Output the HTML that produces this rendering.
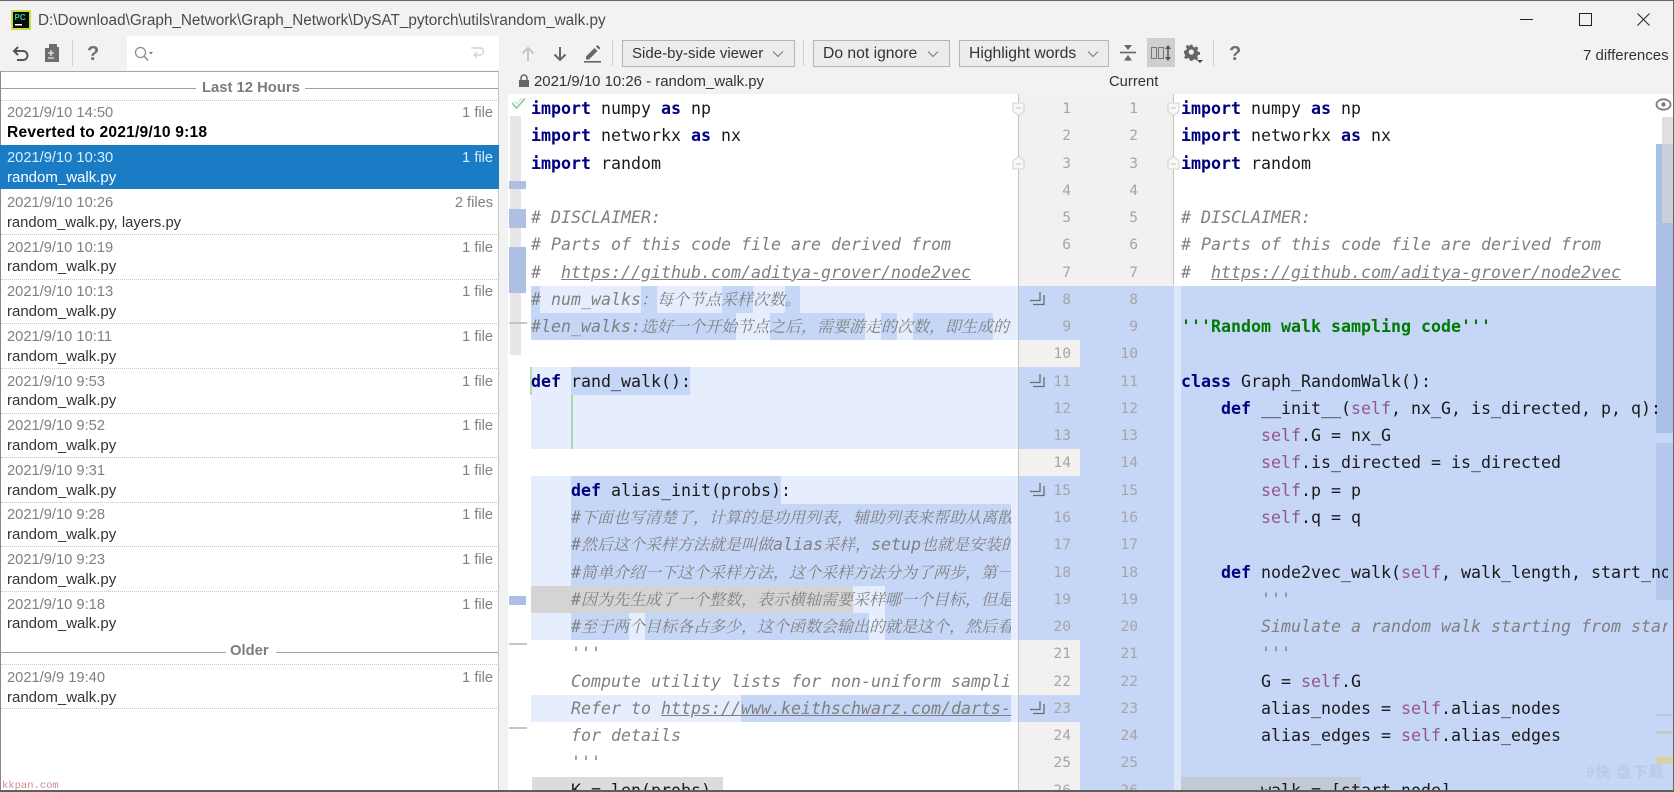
<!DOCTYPE html>
<html><head><meta charset="utf-8"><style>
html,body{margin:0;padding:0;width:1674px;height:792px;overflow:hidden;background:#f2f2f2}
body{position:relative;font-family:"Liberation Sans","Noto Sans CJK SC",sans-serif;color:#333}
div,span.a,svg{position:absolute}
.r{position:absolute}
.t{white-space:nowrap}
.code{position:absolute;overflow:hidden;font-family:"DejaVu Sans Mono","Noto Serif CJK SC",monospace;font-size:16.61px;color:#1a1a1a;top:95px}
.code p{margin:0;height:27.28px;line-height:27.28px;white-space:pre}
.code b{color:#000080;font-weight:bold}
.code i,.c{color:#808080;font-style:italic}
.code u{text-decoration:underline}
.code em{font-style:normal;color:#94558d}
.code strong{color:#007a00;font-weight:bold}
.code s{text-decoration:none;font-size:16px;letter-spacing:0}
.num{position:absolute;top:95px;width:40px;text-align:right;font-family:"DejaVu Sans Mono",monospace;font-size:14.6px;color:#a6a6a6}
.num p{margin:0;height:27.28px;line-height:27.28px}
.date{position:absolute;left:7px;margin-top:1px;font-size:14.7px;color:#808080;white-space:nowrap;line-height:20px}
.fl{position:absolute;right:1181px;margin-top:1px;font-size:14.6px;color:#808080;white-space:nowrap;line-height:20px}
.nm{position:absolute;left:7px;margin-top:1px;font-size:15px;color:#333;white-space:nowrap;line-height:20px}
.dot{position:absolute;left:1px;width:498px;height:0;border-top:1px dotted #c6c6c6}
.dd{position:absolute;top:40px;height:25px;background:#ececec;border:1px solid #b4b4b4;font-size:15px;line-height:26px;color:#333;white-space:nowrap}
.sep{position:absolute;width:1px;background:#cfcfcf;top:40px;height:26px}
.arw{position:absolute;left:1030px;width:16px;height:16px}
</style></head><body>

<!-- frame + title -->
<div style="left:0;top:0;width:1674px;height:1px;background:#666"></div>
<svg style="left:11px;top:10px" width="20" height="20" viewBox="0 0 20 20"><rect width="20" height="20" fill="#c8dc46"/><rect x="2" y="2" width="16" height="16" fill="#0a0a0a"/><rect x="4" y="14" width="7" height="1.5" fill="#fff"/><text x="3.5" y="10" font-family="Liberation Sans" font-size="8" font-weight="bold" fill="#21d789">PC</text></svg>
<div class="t" style="left:38px;top:11px;font-size:15.3px;line-height:20px;color:#4a4a4a">D:\Download\Graph_Network\Graph_Network\DySAT_pytorch\utils\random_walk.py</div>
<div style="left:1520px;top:19px;width:13px;height:1px;background:#222"></div>
<div style="left:1579px;top:13px;width:11px;height:11px;border:1px solid #222"></div>
<svg style="left:1637px;top:13px" width="13" height="13" viewBox="0 0 13 13"><path d="M.5.5l12 12M12.5.5l-12 12" stroke="#222" fill="none"/></svg>

<!-- left toolbar -->
<svg style="left:12px;top:45px" width="18" height="17" viewBox="0 0 18 17"><path d="M6 2L2 6l4 4M2.500 6H11a4.500 4.500 0 0 1 0 9H5" stroke="#555" stroke-width="2" fill="none"/></svg>
<svg style="left:44px;top:43px" width="16" height="20" viewBox="0 0 16 20"><path d="M5 1h8v3h2v15H1V5h4z" fill="#6e6e6e"/><path d="M4 10h6M7 7v6M4 15h6" stroke="#e8e8e8" stroke-width="1.300"/></svg>
<div class="sep" style="left:72px"></div>
<div class="t" style="left:87px;top:43px;font-size:20px;font-weight:bold;line-height:22px;color:#6e6e6e">?</div>
<div style="left:127px;top:36px;width:372px;height:34px;background:#fff"></div>
<svg style="left:134px;top:46px" width="20" height="16" viewBox="0 0 20 16"><circle cx="6.500" cy="6.500" r="5" stroke="#8f8f8f" stroke-width="1.300" fill="none"/><path d="M10 10l4 4.500" stroke="#8f8f8f" stroke-width="1.500"/><path d="M15 6h4l-2 2.500z" fill="#777"/></svg>
<svg style="left:470px;top:46px" width="16" height="15" viewBox="0 0 16 15"><path d="M1 2h9a3.500 3.500 0 0 1 0 7H5M7 6L4 9l3 3" stroke="#d3d3d3" stroke-width="1.400" fill="none"/></svg>

<!-- history list -->
<div style="left:0;top:71px;width:499px;height:720px;background:#fff;border-top:1px solid #a8a8a8;border-right:1px solid #c6c6c6;box-sizing:border-box"></div>
<div style="left:0;top:71px;width:1px;height:720px;background:#888"></div>
<div style="left:1px;top:88px;width:195px;height:1px;background:#a0a0a0"></div>
<div style="left:305px;top:88px;width:193px;height:1px;background:#a0a0a0"></div>
<div class="t" style="left:202px;top:78px;font-size:14.8px;font-weight:bold;line-height:20px;color:#7c7c7c">Last 12 Hours</div>
<div class="dot" style="top:100px"></div>

<div class="date" style="top:102px">2021/9/10 14:50</div><div class="fl" style="top:102px">1 file</div><div class="nm" style="top:122px;font-weight:bold;color:#000;font-size:15.6px;letter-spacing:.2px">Reverted to 2021/9/10 9:18</div>

<div style="left:0;top:145px;width:499px;height:44px;background:#1a7cc4"></div>
<div class="date" style="top:147px;color:#d9eefa">2021/9/10 10:30</div><div class="fl" style="top:147px;color:#d9eefa">1 file</div><div class="nm" style="top:167px;color:#fff">random_walk.py</div>

<div class="date" style="top:192px">2021/9/10 10:26</div><div class="fl" style="top:192px">2 files</div><div class="nm" style="top:212px;font-size:14.8px">random_walk.py, layers.py</div><div class="dot" style="top:234px"></div>
<div class="date" style="top:237px">2021/9/10 10:19</div><div class="fl" style="top:237px">1 file</div><div class="nm" style="top:256px">random_walk.py</div><div class="dot" style="top:279px"></div>
<div class="date" style="top:281px">2021/9/10 10:13</div><div class="fl" style="top:281px">1 file</div><div class="nm" style="top:301px">random_walk.py</div><div class="dot" style="top:323px"></div>
<div class="date" style="top:326px">2021/9/10 10:11</div><div class="fl" style="top:326px">1 file</div><div class="nm" style="top:346px">random_walk.py</div><div class="dot" style="top:368px"></div>
<div class="date" style="top:371px">2021/9/10 9:53</div><div class="fl" style="top:371px">1 file</div><div class="nm" style="top:390px">random_walk.py</div><div class="dot" style="top:413px"></div>
<div class="date" style="top:415px">2021/9/10 9:52</div><div class="fl" style="top:415px">1 file</div><div class="nm" style="top:435px">random_walk.py</div><div class="dot" style="top:457px"></div>
<div class="date" style="top:460px">2021/9/10 9:31</div><div class="fl" style="top:460px">1 file</div><div class="nm" style="top:480px">random_walk.py</div><div class="dot" style="top:502px"></div>
<div class="date" style="top:504px">2021/9/10 9:28</div><div class="fl" style="top:504px">1 file</div><div class="nm" style="top:524px">random_walk.py</div><div class="dot" style="top:546px"></div>
<div class="date" style="top:549px">2021/9/10 9:23</div><div class="fl" style="top:549px">1 file</div><div class="nm" style="top:569px">random_walk.py</div><div class="dot" style="top:591px"></div>
<div class="date" style="top:594px">2021/9/10 9:18</div><div class="fl" style="top:594px">1 file</div><div class="nm" style="top:613px">random_walk.py</div>

<div style="left:1px;top:652px;width:225px;height:1px;background:#a0a0a0"></div>
<div style="left:276px;top:652px;width:222px;height:1px;background:#a0a0a0"></div>
<div class="t" style="left:230px;top:641px;font-size:14.8px;font-weight:bold;line-height:20px;color:#7c7c7c">Older</div>
<div class="dot" style="top:664px"></div>
<div class="date" style="top:667px">2021/9/9 19:40</div><div class="fl" style="top:667px">1 file</div><div class="nm" style="top:687px">random_walk.py</div><div class="dot" style="top:708px"></div>
<div class="t" style="left:2px;top:779px;font-family:'Liberation Mono',monospace;font-size:10.500px;line-height:14px;color:#d08c8c">kkpan.com</div>

<!-- main toolbar -->
<svg style="left:520px;top:45px" width="16" height="18" viewBox="0 0 16 18"><path d="M8 16V3M2.500 8.500L8 3l5.500 5.500" stroke="#c4c4c4" stroke-width="2" fill="none"/></svg>
<svg style="left:552px;top:45px" width="16" height="18" viewBox="0 0 16 18"><path d="M8 2v13M2.500 9.500L8 15l5.500-5.500" stroke="#666" stroke-width="2" fill="none"/></svg>
<svg style="left:583px;top:44px" width="19" height="19" viewBox="0 0 19 19"><path d="M3 12.500L11.500 4l3 3L6 15.500H3zM13 2.500l1.500-1.500 3 3L16 5.500z" fill="#666"/><rect x="1" y="17" width="17" height="1.600" fill="#666"/></svg>
<div class="sep" style="left:612px"></div>
<div class="dd" style="left:622px;width:171px"><span style="position:absolute;left:9px;font-size:15.05px">Side-by-side viewer</span></div>
<svg style="left:772px;top:50px" width="12" height="8" viewBox="0 0 12 8"><path d="M1 1.500L6 6.500l5-5" stroke="#777" fill="none"/></svg>
<div class="sep" style="left:803px"></div>
<div class="dd" style="left:813px;width:135px"><span style="position:absolute;left:9px;font-size:15.7px">Do not ignore</span></div>
<svg style="left:927px;top:50px" width="12" height="8" viewBox="0 0 12 8"><path d="M1 1.500L6 6.500l5-5" stroke="#777" fill="none"/></svg>
<div class="dd" style="left:959px;width:148px"><span style="position:absolute;left:9px;font-size:15.7px">Highlight words</span></div>
<svg style="left:1087px;top:50px" width="12" height="8" viewBox="0 0 12 8"><path d="M1 1.500L6 6.500l5-5" stroke="#777" fill="none"/></svg>
<svg style="left:1120px;top:44px" width="16" height="18" viewBox="0 0 16 18"><path d="M0 8.500h16" stroke="#666" stroke-width="1.600"/><path d="M4 1h8L8 6zM4 16.500h8L8 11z" fill="#666"/></svg>
<div style="left:1147px;top:38px;width:28px;height:29px;background:#cfcfcf"></div>
<svg style="left:1151px;top:44px" width="22" height="18" viewBox="0 0 22 18"><rect x=".5" y="3.500" width="5" height="11" fill="none" stroke="#777"/><rect x="7.500" y="3.500" width="5" height="11" fill="none" stroke="#777"/><path d="M17 2v14" stroke="#555" stroke-width="1.500"/><path d="M14 5l3-4 3 4zM14 13l3 4 3-4z" fill="#555"/></svg>
<svg style="left:1184px;top:43px" width="20" height="21" viewBox="0 0 20 21"><path d="M7 1h3l.5 2.500 2 .8L14.800 3l2 2-1.300 2.200.8 2 2.500.5v3l-2.500.5-.8 2 1.300 2.200-2 2-2.300-1.300-2 .8L10 20H7l-.5-2.500-2-.8L2.200 18l-2-2 1.300-2.200-.8-2L0 11V8l2.500-.5.8-2L2 3.200l2-2 2.300 1.300L6.500 3z" transform="scale(.85) translate(0 1)" fill="#666"/><circle cx="7.300" cy="9" r="2.600" fill="#f2f2f2"/><path d="M13 17h6l-3 3z" fill="#444"/></svg>
<div class="sep" style="left:1213px"></div>
<div class="t" style="left:1229px;top:43px;font-size:20px;font-weight:bold;line-height:22px;color:#6e6e6e">?</div>
<div class="t" style="left:1583px;top:45px;margin-top:1px;font-size:15px;line-height:20px;color:#333">7 differences</div>

<!-- header row -->
<svg style="left:518px;top:74px" width="12" height="14" viewBox="0 0 12 14"><path d="M3 6V4a3 3 0 0 1 6 0v2" stroke="#666" stroke-width="1.500" fill="none"/><rect x="1" y="6" width="10" height="7" fill="#666"/></svg>
<div class="t" style="left:534px;top:72px;font-size:14.95px;line-height:20px;color:#333">2021/9/10 10:26 - random_walk.py</div>
<div class="t" style="left:1109px;top:72px;font-size:14.8px;line-height:20px;color:#333">Current</div>

<!-- editors background -->
<div style="left:508px;top:94px;width:510px;height:696px;background:#fff"></div>
<div style="left:1018px;top:94px;width:155px;height:696px;background:#f2f1f0"></div>
<div style="left:1018px;top:94px;width:1px;height:696px;background:#c4c4c4"></div>
<div style="left:1173px;top:94px;width:1px;height:191px;background:#c4c4c4"></div>
<div style="left:1174px;top:94px;width:500px;height:191.500px;background:#fff"></div>

<!-- right blue -->
<div style="left:1080px;top:285.500px;width:94px;height:505px;background:#c5d6f6"></div>
<div style="left:1174px;top:285.500px;width:7px;height:505px;background:#dde7fa"></div>
<div style="left:1181px;top:285.500px;width:493px;height:505px;background:#c5d6f6"></div>
<div style="left:1181px;top:776.500px;width:180px;height:14px;background:#c3c9d6"></div>

<!-- left hunks light -->
<div style="left:531px;top:285.500px;width:487px;height:54.500px;background:#e6edfc"></div>
<div style="left:531px;top:367.300px;width:487px;height:81.800px;background:#e6edfc"></div>
<div style="left:531px;top:476.400px;width:487px;height:163.700px;background:#e6edfc"></div>
<div style="left:531px;top:694.700px;width:487px;height:27.200px;background:#e6edfc"></div>
<!-- left gutter bands -->
<div style="left:1019px;top:285.500px;width:61px;height:54.500px;background:#c5d6f6"></div>
<div style="left:1019px;top:367.300px;width:61px;height:81.800px;background:#c5d6f6"></div>
<div style="left:1019px;top:476.400px;width:61px;height:163.700px;background:#c5d6f6"></div>
<div style="left:1019px;top:694.700px;width:61px;height:27.200px;background:#c5d6f6"></div>

<!-- word highlights left: line 8 -->
<div style="left:531px;top:285.500px;width:9px;height:27.300px;background:#c5d6f6"></div>
<div style="left:641px;top:285.500px;width:16px;height:27.300px;background:#c5d6f6"></div>
<div style="left:722px;top:285.500px;width:31px;height:27.300px;background:#c5d6f6"></div>
<div style="left:785px;top:285.500px;width:15px;height:27.300px;background:#c5d6f6"></div>
<!-- line 9 -->
<div style="left:531px;top:312.700px;width:205px;height:27.300px;background:#c5d6f6"></div>
<div style="left:770px;top:312.700px;width:95px;height:27.300px;background:#c5d6f6"></div>
<div style="left:881px;top:312.700px;width:16px;height:27.300px;background:#c5d6f6"></div>
<div style="left:913px;top:312.700px;width:80px;height:27.300px;background:#c5d6f6"></div>
<!-- line 11 -->
<div style="left:571px;top:367.300px;width:119px;height:27.300px;background:#c5d6f6"></div>
<div style="left:530px;top:367.300px;width:1.500px;height:27.300px;background:#b5dcb5"></div>
<div style="left:570.500px;top:394.600px;width:2px;height:54.500px;background:#a9d9a9"></div>
<!-- lines 15-20 -->
<div style="left:571px;top:476.400px;width:210px;height:27.300px;background:#c5d6f6"></div>
<div style="left:571px;top:503.700px;width:440px;height:81.900px;background:#c5d6f6"></div>
<div style="left:531px;top:585.500px;width:322px;height:27.300px;background:#d4d4d4"></div>
<div style="left:885px;top:585.500px;width:126px;height:27.300px;background:#c5d6f6"></div>
<div style="left:571px;top:612.800px;width:58px;height:27.300px;background:#c5d6f6"></div>
<div style="left:645px;top:612.800px;width:224px;height:27.300px;background:#c5d6f6"></div>
<div style="left:885px;top:612.800px;width:126px;height:27.300px;background:#c5d6f6"></div>
<!-- line 23 -->
<div style="left:741px;top:694.700px;width:270px;height:27.200px;background:#c5d6f6"></div>
<!-- line 26 -->
<div style="left:532px;top:777px;width:191px;height:13px;background:#dcdcdc"></div>

<!-- left marker stripe -->
<div style="left:510px;top:116px;width:11px;height:239px;background:#e6e6e6"></div>
<div style="left:509px;top:181px;width:17px;height:8px;background:#adbfe3"></div>
<div style="left:509px;top:209px;width:17px;height:19px;background:#adbfe3"></div>
<div style="left:509px;top:247px;width:17px;height:46px;background:#adbfe3"></div>
<div style="left:509px;top:322px;width:18px;height:2px;background:#c6c6c6"></div>
<div style="left:509px;top:596px;width:17px;height:9px;background:#adbfe3"></div>
<div style="left:509px;top:643px;width:18px;height:2px;background:#c6c6c6"></div>
<div style="left:509px;top:727px;width:18px;height:2px;background:#c6c6c6"></div>
<svg style="left:511px;top:97px" width="15" height="13" viewBox="0 0 15 13"><path d="M1 6l4.500 5L14 1.500" stroke="#8ec89a" stroke-width="1.600" fill="none"/><path d="M3 4l2.500 3L11 1" stroke="#bfe0c6" stroke-width="1" fill="none"/></svg>

<!-- fold marks -->
<svg style="left:1012px;top:102px" width="13" height="15" viewBox="0 0 13 15"><path d="M1 1h11v8l-5.500 5L1 9z" fill="#f8f8f8" stroke="#d2d2d2"/><path d="M4 6h5" stroke="#c4c4c4"/></svg>
<svg style="left:1012px;top:155px" width="13" height="15" viewBox="0 0 13 15"><path d="M1 14h11V6L6.500 1 1 6z" fill="#f8f8f8" stroke="#d2d2d2"/><path d="M4 9h5" stroke="#c4c4c4"/></svg>
<svg style="left:1167px;top:102px" width="13" height="15" viewBox="0 0 13 15"><path d="M1 1h11v8l-5.500 5L1 9z" fill="#f8f8f8" stroke="#d2d2d2"/><path d="M4 6h5" stroke="#c4c4c4"/></svg>
<svg style="left:1167px;top:155px" width="13" height="15" viewBox="0 0 13 15"><path d="M1 14h11V6L6.500 1 1 6z" fill="#f8f8f8" stroke="#d2d2d2"/><path d="M4 9h5" stroke="#c4c4c4"/></svg>

<!-- revert arrows -->
<svg class="arw" style="top:291px" viewBox="0 0 16 16"><path d="M0 9.500h10V1M3 13.500h11V4" stroke="#6d6d6d" stroke-width="1.300" fill="none"/></svg>
<svg class="arw" style="top:373px" viewBox="0 0 16 16"><path d="M0 9.500h10V1M3 13.500h11V4" stroke="#6d6d6d" stroke-width="1.300" fill="none"/></svg>
<svg class="arw" style="top:482px" viewBox="0 0 16 16"><path d="M0 9.500h10V1M3 13.500h11V4" stroke="#6d6d6d" stroke-width="1.300" fill="none"/></svg>
<svg class="arw" style="top:700px" viewBox="0 0 16 16"><path d="M0 9.500h10V1M3 13.500h11V4" stroke="#6d6d6d" stroke-width="1.300" fill="none"/></svg>

<!-- line numbers -->
<div class="num" style="left:1031px"><p>1</p><p>2</p><p>3</p><p>4</p><p>5</p><p>6</p><p>7</p><p>8</p><p>9</p><p>10</p><p>11</p><p>12</p><p>13</p><p>14</p><p>15</p><p>16</p><p>17</p><p>18</p><p>19</p><p>20</p><p>21</p><p>22</p><p>23</p><p>24</p><p>25</p><p>26</p></div>
<div class="num" style="left:1098px"><p>1</p><p>2</p><p>3</p><p>4</p><p>5</p><p>6</p><p>7</p><p>8</p><p>9</p><p>10</p><p>11</p><p>12</p><p>13</p><p>14</p><p>15</p><p>16</p><p>17</p><p>18</p><p>19</p><p>20</p><p>21</p><p>22</p><p>23</p><p>24</p><p>25</p><p>26</p></div>

<!-- right stripe (under the text) -->
<div style="left:1656px;top:144px;width:18px;height:289px;background:#a9bfe6"></div>
<div style="left:1656px;top:443px;width:18px;height:157px;background:#b4c8ee"></div>
<div style="left:1662px;top:117px;width:11px;height:106px;background:#d5d5d5;opacity:.75"></div>
<div style="left:1656px;top:714px;width:18px;height:2px;background:#b9cbe0"></div>
<div style="left:1656px;top:731px;width:18px;height:3px;background:#c3cdc8"></div>
<div style="left:1656px;top:757px;width:18px;height:7px;background:#d8d2a6"></div>

<!-- left code -->
<div class="code" style="left:531px;width:480px;height:695px"><p><b>import</b> numpy <b>as</b> np</p><p><b>import</b> networkx <b>as</b> nx</p><p><b>import</b> random</p><p> </p><p><i># DISCLAIMER:</i></p><p><i># Parts of this code file are derived from</i></p><p><i>#  <u>https://github.com/aditya-grover/node2vec</u></i></p><p><i># num_walks<s>：每个节点采样次数。</s></i></p><p><i>#len_walks:<s>选好一个开始节点之后，需要游走的次数，即生成的</s></i></p><p> </p><p><b>def</b> rand_walk():</p><p> </p><p> </p><p> </p><p>    <b>def</b> alias_init(probs):</p><p><i>    #<s>下面也写清楚了，计算的是功用列表，辅助列表来帮助从离散</s></i></p><p><i>    #<s>然后这个采样方法就是叫做</s>alias<s>采样，</s>setup<s>也就是安装的</s></i></p><p><i>    #<s>简单介绍一下这个采样方法，这个采样方法分为了两步，第一</s></i></p><p><i>    #<s>因为先生成了一个整数，表示横轴需要采样哪一个目标，但是</s></i></p><p><i>    #<s>至于两个目标各占多少，这个函数会输出的就是这个，然后看</s></i></p><p><i>    '''</i></p><p><i>    Compute utility lists for non-uniform sampling from discrete</i></p><p><i>    Refer to <u>https://www.keithschwarz.com/darts-dice-coins/</u></i></p><p><i>    for details</i></p><p><i>    '''</i></p><p>    K = len(probs)</p></div>

<!-- right code -->
<div class="code" style="left:1181px;width:487px;height:695px"><p><b>import</b> numpy <b>as</b> np</p><p><b>import</b> networkx <b>as</b> nx</p><p><b>import</b> random</p><p> </p><p><i># DISCLAIMER:</i></p><p><i># Parts of this code file are derived from</i></p><p><i>#  <u>https://github.com/aditya-grover/node2vec</u></i></p><p> </p><p><strong>'''Random walk sampling code'''</strong></p><p> </p><p><b>class</b> Graph_RandomWalk():</p><p>    <b>def</b> __init__(<em>self</em>, nx_G, is_directed, p, q):</p><p>        <em>self</em>.G = nx_G</p><p>        <em>self</em>.is_directed = is_directed</p><p>        <em>self</em>.p = p</p><p>        <em>self</em>.q = q</p><p> </p><p>    <b>def</b> node2vec_walk(<em>self</em>, walk_length, start_node):</p><p><i>        '''</i></p><p><i>        Simulate a random walk starting from start_node.</i></p><p><i>        '''</i></p><p>        G = <em>self</em>.G</p><p>        alias_nodes = <em>self</em>.alias_nodes</p><p>        alias_edges = <em>self</em>.alias_edges</p><p> </p><p>        walk = [start_node]</p></div>

<svg style="left:1655px;top:98px" width="17" height="13" viewBox="0 0 17 13"><ellipse cx="8.500" cy="6.500" rx="7" ry="5.200" fill="none" stroke="#7e7e7e" stroke-width="1.800"/><circle cx="8.500" cy="6.500" r="2.200" fill="#7e7e7e"/></svg>
<div class="t" style="left:1586px;top:763px;font-size:15px;font-weight:bold;line-height:20px;color:#b9cae9;letter-spacing:1px;font-family:'Liberation Sans','Noto Sans CJK SC',sans-serif">9快 盘下载</div>

<div style="left:1673px;top:0;width:1px;height:792px;background:#666"></div>
<div style="left:0;top:790px;width:1674px;height:2px;background:#5e5e5e"></div>
</body></html>
